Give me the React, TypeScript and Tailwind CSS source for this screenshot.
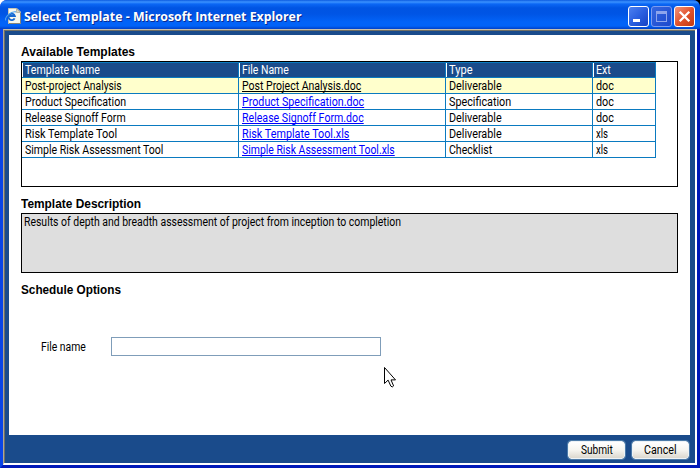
import { useLayoutEffect, useRef, useState } from 'react';

const rows = [
  { name: 'Post-project Analysis', nw: 97, file: 'Post Project Analysis.doc', fw: 119, type: 'Deliverable', tw: 53, ext: 'doc', ew: 18 },
  { name: 'Product Specification', nw: 101, file: 'Product Specification.doc', fw: 122, type: 'Specification', tw: 62, ext: 'doc', ew: 18 },
  { name: 'Release Signoff Form', nw: 101, file: 'Release Signoff Form.doc', fw: 122, type: 'Deliverable', tw: 53, ext: 'doc', ew: 18 },
  { name: 'Risk Template Tool', nw: 92, file: 'Risk Template Tool.xls', fw: 107, type: 'Deliverable', tw: 53, ext: 'xls', ew: 12 },
  { name: 'Simple Risk Assessment Tool', nw: 138, file: 'Simple Risk Assessment Tool.xls', fw: 153, type: 'Checklist', tw: 43, ext: 'xls', ew: 12 },
];

// Condenses or widens a single line of text to a fixed number of pixels.
function Fit({ text, width, className = '' }: { text: string; width: number; className?: string }) {
  const ref = useRef<HTMLSpanElement>(null);
  const [scale, setScale] = useState(1);
  useLayoutEffect(() => {
    if (ref.current) setScale(width / ref.current.offsetWidth);
  }, [text, width]);
  return (
    <span className="inline-block align-top" style={{ width }}>
      <span ref={ref} className={`inline-block origin-left align-top whitespace-pre ${className}`} style={{ transform: `scaleX(${scale})` }}>
        {text}
      </span>
    </span>
  );
}

function PageIcon() {
  return (
    <svg width="17" height="17" viewBox="0 0 17 17" className="shrink-0">
      <path d="M3.5 .5H12l3.5 3.5v11.5h-12z" fill="#f7f7ee" stroke="#c8c6b4" strokeWidth="1" />
      <path d="M11.5 .5v4h4z" fill="#d5d3c2" stroke="#99978a" strokeWidth=".6" />
      <path d="M15.5 5v10.5H4" fill="none" stroke="#77756a" strokeWidth=".8" />
      <path d="M9.6 10.4A3.2 3.2 0 1 1 9.8 8H4" fill="none" stroke="#1769d2" strokeWidth="1.9" />
      <path d="M.9 12.4C-1 9.4 6 2.8 11 3.9" fill="none" stroke="#4ba0ee" strokeWidth="1.1" />
    </svg>
  );
}

function WindowButtons() {
  return (
    <div className="flex gap-[2px]">
      <div className="flex h-[21px] w-[21px] items-end rounded-[3px] border border-white bg-linear-to-br from-[#4d80f0] via-[#2a5fe0] to-[#1742c4] pb-[4px] pl-[4px]">
        <div className="h-[3px] w-[7px] bg-white" />
      </div>
      <div className="flex h-[21px] w-[21px] items-center justify-center rounded-[3px] border border-[#7c9cf0] bg-linear-to-br from-[#3566e0] to-[#1c48cc]">
        <div className="h-[11px] w-[11px] border border-t-[3px] border-[#8ea5ec]" />
      </div>
      <div className="flex h-[21px] w-[21px] items-center justify-center rounded-[3px] border border-white bg-linear-to-br from-[#f0937a] via-[#e2532c] to-[#c23a12]">
        <svg width="13" height="13" viewBox="0 0 13 13">
          <path d="M1.7 1.7l9.6 9.6M11.3 1.7l-9.6 9.6" stroke="white" strokeWidth="2.3" />
        </svg>
      </div>
    </div>
  );
}

function HeadCell({ text, width }: { text: string; width: number }) {
  return (
    <th className="border-r border-b border-[#0a7ac0] p-0 text-left font-normal">
      <div className="h-[14px] border-l border-white pl-[2px] leading-[14px]">
        <Fit text={text} width={width} />
      </div>
    </th>
  );
}

function BodyCell({ text, width, link = '' }: { text: string; width: number; link?: string }) {
  return (
    <td className="h-[16px] border-r border-b border-[#0a7ac0] p-0 pl-[3px]">
      <div className="h-[15px] leading-[17px]">
        {link ? (
          <a className={link}>
            <Fit text={text} width={width} className="underline decoration-1 underline-offset-[1px] [text-decoration-skip-ink:none]" />
          </a>
        ) : (
          <Fit text={text} width={width} />
        )}
      </div>
    </td>
  );
}

function Heading({ text, width }: { text: string; width: number }) {
  return (
    <h2 className="h-[26px] pt-[9px] leading-[16px] font-bold">
      <Fit text={text} width={width} className="font-['Liberation_Sans',sans-serif] text-[12px]" />
    </h2>
  );
}

function PushButton({ text, width }: { text: string; width: number }) {
  return (
    <button className="flex h-[18px] w-[57px] items-center justify-center rounded-[3px] border border-[#edf2f6] bg-linear-to-b from-white via-[#f6f5f0] to-[#dcd8cf] leading-[15px] text-black outline outline-[#4b7aa8]">
      <Fit text={text} width={width} />
    </button>
  );
}

export default function App() {
  return (
    <div className="relative flex h-[468px] w-[700px] flex-col overflow-hidden bg-linear-to-r from-white to-black font-['Roboto','Liberation_Sans',sans-serif] text-[12px] text-black">
      <div className="flex h-[468px] flex-col rounded-t-[7px] bg-[#0831d9]">
        <header className="flex h-[29px] shrink-0 items-center justify-between rounded-t-[7px] bg-[linear-gradient(180deg,#0c5be0_0px,#3b92ff_2px,#0b67f5_4px,#0054e3_8px,#0055e5_14px,#0263f8_22px,#0263f8_26px,#0040c8_29px)] pt-[3px] pr-[5px] pl-[5px]">
          <div className="flex items-center gap-[2px]">
            <PageIcon />
            <Fit
              text="Select Template - Microsoft Internet Explorer"
              width={278}
              className="pt-[1px] font-['Open_Sans',sans-serif] text-[12.5px] leading-[18px] font-bold text-white [text-shadow:1px_1px_0_#0a2a90]"
            />
          </div>
          <WindowButtons />
        </header>
        <div className="flex min-h-0 flex-1 border-r-[3px] border-b-[3px] border-l-[3px] border-r-[#0019b8] border-b-[#0019b8] border-l-[#0a45e6]">
          <div className="flex min-w-0 flex-1 border-t border-r-2 border-b-2 border-l border-t-[#c5bfae] border-r-white border-b-white border-l-[#aca899]">
            <div className="flex min-w-0 flex-1 flex-col border-t border-l border-[#716f64] bg-[#1a4b8b] pt-[4px] pr-[5px] pl-[4px]">
              <main className="h-[400px] shrink-0 bg-white px-[12px]">
                <Heading text="Available Templates" width={114} />
                <section className="h-[126px] border border-black">
                  <table className="w-[634px] table-fixed border-separate border-spacing-0 border-t border-[#0a7ac0]">
                    <colgroup>
                      <col className="w-[217px]" />
                      <col className="w-[207px]" />
                      <col className="w-[147px]" />
                      <col className="w-[63px]" />
                    </colgroup>
                    <thead>
                      <tr className="h-[15px] bg-[#1a4b8b] text-white">
                        <HeadCell text="Template Name" width={75} />
                        <HeadCell text="File Name" width={47} />
                        <HeadCell text="Type" width={24} />
                        <HeadCell text="Ext" width={15} />
                      </tr>
                    </thead>
                    <tbody>
                      {rows.map((r, i) => (
                        <tr key={r.name} className={i === 0 ? 'bg-[#ffffcc]' : 'bg-white'}>
                          <BodyCell text={r.name} width={r.nw} />
                          <BodyCell text={r.file} width={r.fw} link={i === 0 ? 'text-black' : 'text-[#0000ff]'} />
                          <BodyCell text={r.type} width={r.tw} />
                          <BodyCell text={r.ext} width={r.ew} />
                        </tr>
                      ))}
                    </tbody>
                  </table>
                </section>
                <Heading text="Template Description" width={120} />
                <section className="h-[60px] border border-black bg-[#dedede] pt-[1px] pl-[2px] leading-[15px]">
                  <Fit text="Results of depth and breadth assessment of project from inception to completion" width={377} />
                </section>
                <Heading text="Schedule Options" width={100} />
                <label className="mt-[38px] flex items-center pl-[20px]">
                  <span className="w-[70px] pt-[2px] leading-[15px]"><Fit text="File name" width={45} /></span>
                  <input className="h-[19px] w-[270px] border border-[#7f9db9] bg-white" />
                </label>
              </main>
              <footer className="flex flex-1 items-center justify-end gap-[7px] pt-[2px] pr-[1px]">
                <PushButton text="Submit" width={32} />
                <PushButton text="Cancel" width={33} />
              </footer>
            </div>
          </div>
        </div>
      </div>
      <svg width="13" height="22" viewBox="0 0 13 22" className="absolute top-[367px] left-[384px]">
        <path d="M.5 .5v16l3.6-3.4 2.7 6q1.5 1.8 2.8-.2l-2.6-6h4.5z" fill="white" stroke="black" strokeWidth="1" />
      </svg>
    </div>
  );
}
